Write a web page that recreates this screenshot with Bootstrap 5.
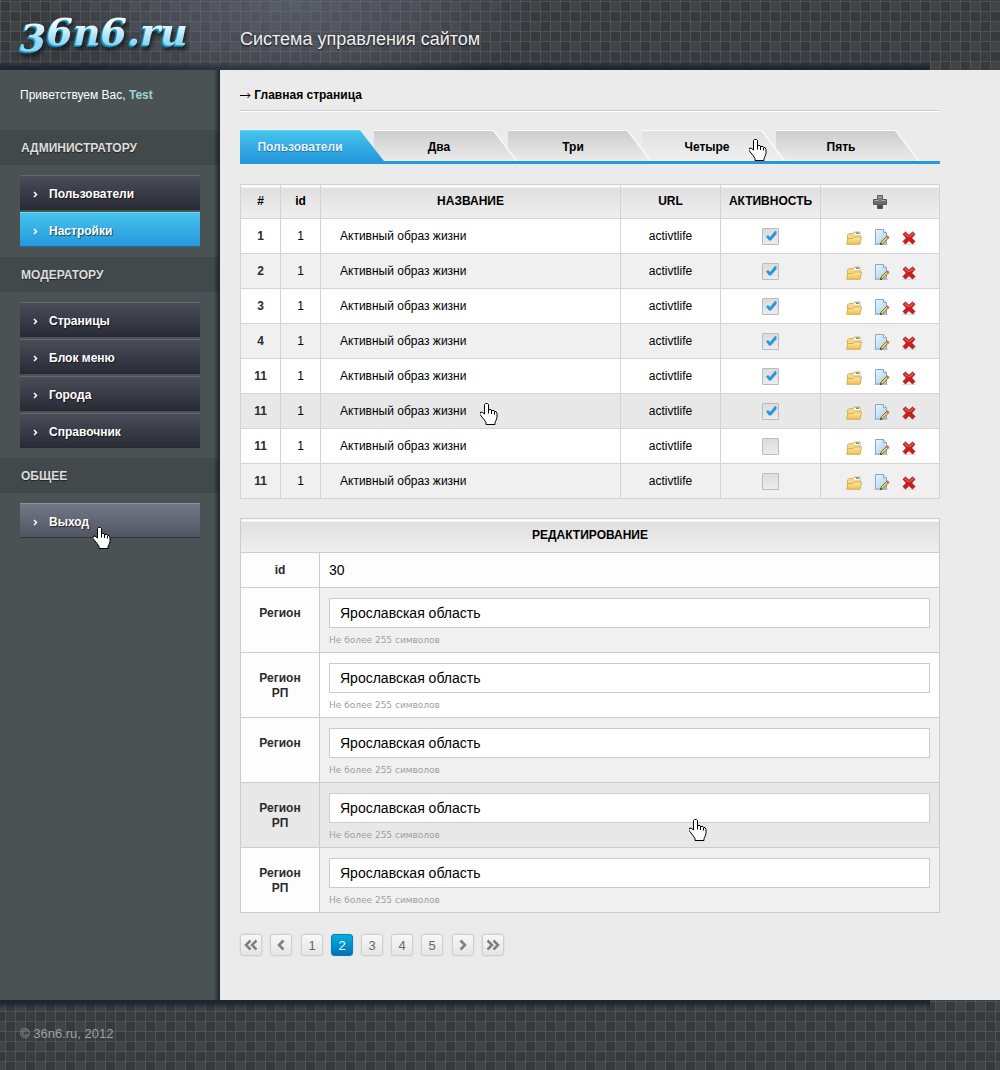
<!DOCTYPE html>
<html lang="ru">
<head>
<meta charset="utf-8">
<meta name="viewport" content="width=device-width, initial-scale=1">
<title>36n6.ru</title>
<link rel="stylesheet" href="https://cdn.jsdelivr.net/npm/bootstrap@5.3.0/dist/css/bootstrap.min.css">
<style>
body{font:12px/15px "Liberation Sans",Arial,sans-serif;color:#000;background:#ebebeb}
a{text-decoration:none;color:inherit}
.plaid{position:relative;height:70px;background-color:#373a3d;
 background-image:linear-gradient(#4e5255 1px,transparent 1px),linear-gradient(90deg,#4e5255 1px,transparent 1px),conic-gradient(#404447 25%,transparent 0 50%,#3a3e41 0 75%,transparent 0);
 background-size:10px 10px,10px 10px,20px 20px}
.top-bar{background-position:0 1px,0 0,0 1px}
.bottom-bar{background-position:0 1px,5px 0,5px 1px}
.plaid::before{content:"";position:absolute;left:0;right:70px;height:9px;background:linear-gradient(#20242f 25%,transparent)}
.top-bar::before{bottom:0;transform:scaleY(-1)}
.bottom-bar::before{top:0}
.top-bar::after{content:"";position:absolute;inset:0;background:radial-gradient(ellipse 250px 110px at 290px 0,rgba(112,116,135,.55),rgba(112,116,135,.3) 50%,transparent)}
.top-bar>*{position:relative;z-index:1}
.brand{width:220px;font:italic bold 38px/48px "DejaVu Serif",serif}
.brand:hover{color:inherit}
.brand-ink{background:linear-gradient(#fff 25%,#8fd9f5 75%);-webkit-background-clip:text;background-clip:text;color:transparent;filter:drop-shadow(-1px 1px 0 #2ba3cf) drop-shadow(-1px 1px 0 #14799f) drop-shadow(2px 3px 2px rgba(0,0,0,.6))}
.old-style{vertical-align:-6px;line-height:0}
.site-title{font-size:18px;line-height:22px;color:#f0f0f0;text-shadow:0 1px 2px #111}
.side{width:220px;background:linear-gradient(270deg,#1f2430,transparent 6px),#4a5254;color:#fff}
.greet{height:60px;padding:18px 20px 0}
.greet a{color:#a0d4d0}
.side h2{font-size:12px;font-weight:700;line-height:33px;height:35px;margin:0;padding:2px 0 0 21px;color:#ddd;background:linear-gradient(270deg,#1f2430,rgba(62,69,70,.72) 6px);text-shadow:0 1px 1px #222}
.side ul{padding:10px 20px;margin:0;gap:2px}
.side-btn{display:flex;align-items:center;height:35px;padding:3px 0 0 13px;gap:11px;color:#fff;font-weight:700;background:linear-gradient(#4a4d58,#292c36);border-top:1px solid #626a70;border-bottom:1px solid #25282f;text-shadow:1px 1px 1px rgba(0,0,0,.6)}
.side-btn.active{background:linear-gradient(#45c4ec,#2698dc);border-color:#6fdaf3 #fff #1a6ba0}
.side-btn.over{background:linear-gradient(#717986,#505561);border-top-color:#8b929b;border-bottom-color:#30343f}
.content{padding:0 60px 44px 20px;min-width:0}
.crumb{height:41px;padding-top:18px;border-bottom:1px solid #ccc;box-shadow:0 1px 0 #fff;margin:0 0 19px;font-size:12px}
.tab-row{border-bottom:3px solid #2698dc;height:34px;margin-bottom:20px}
.tab-row li{margin-right:-10px;position:relative;flex:0 0 144px}
.tab-link{position:relative;z-index:0;display:block;height:31px;line-height:15px;padding:10px 24px 0 10px;text-align:center;font-weight:700;color:#000;background:#fafafa;clip-path:polygon(0 0,120px 0,144px 100%,0 100%)}
.tab-link::before{content:"";position:absolute;inset:1px 0 0 0;z-index:-1;background:linear-gradient(#cdcdcd,#ebebeb);clip-path:polygon(0 0,119px 0,142px 100%,0 100%)}
.tab-link.over::before{background:linear-gradient(#e1e1e1,#efefef)}
.tab-link.active{background:#6ad4f3;color:#eaf3f8;padding-left:0;text-shadow:0 1px 1px #176da6}
.tab-link.active::before{background:linear-gradient(#45c4ec,#2698dc);clip-path:polygon(0 0,120px 0,144px 100%,0 100%)}
.tab-row li:nth-child(1){z-index:5}.tab-row li:nth-child(2){z-index:4}.tab-row li:nth-child(3){z-index:3}.tab-row li:nth-child(4){z-index:2}
.grid-t{width:100%;table-layout:fixed;border-collapse:collapse;margin:0 0 19px}
.grid-t td,.grid-t th{border:1px solid #d3d3d3;height:35px;padding:0;text-align:center;vertical-align:middle}
.grid-t thead th{height:34px;background:linear-gradient(#fff 2px,#dfdfdf 2px,#efefef)}
.grid-t tbody tr{background:#fff}
.grid-t tbody tr:nth-child(even){background:#f0f0f0}
.grid-t tbody tr.over{background:#e8e8e8}
.grid-t tbody th{color:#2b2b2b}
.grid-t td.title{text-align:left;padding-left:19px;position:relative}
.tick{appearance:none;display:block;width:17px;height:17px;margin:0 auto;border:1px solid #bcbcbc;border-radius:1px;background:linear-gradient(#dcdcdc,#ececec)}
.tick:checked{background:url("data:image/svg+xml,%3Csvg xmlns='http://www.w3.org/2000/svg' viewBox='0 0 15 15'%3E%3Cpath d='M3 7.500 5 6l2 2 5-6 1.500.5V5L8 11.500H6z' fill='%232698dc'/%3E%3C/svg%3E"),linear-gradient(#dcdcdc,#ececec)}
.tools{display:flex;justify-content:center;gap:12px;padding:3px 0 0 2px}
.icon-btn{border:0;padding:0;background:none;display:flex}
.form-t td,.form-t th{border-color:#ccc}
.form-t tbody tr.field-row>*{height:65px;vertical-align:top}
.form-t tbody th{background:#fdfdfd}
.form-t tbody tr.over th{background:#e8e8e8}
.form-t tbody tr.plain-row{background:#fdfdfd}
.form-t td{text-align:left;padding:0 9px;position:relative}
.form-t .field-row th{padding-top:18px}
.form-t .field-row td{padding-top:10px}
.id-val{font-size:14px;line-height:18px}
.text-field{display:block;width:100%;height:30px;border:1px solid #ccc;background:#fff;padding:0 10px;font-size:14px;color:#000;border-radius:0}
.hint{display:block;margin-top:6px;font:9px/12px "DejaVu Sans",sans-serif;color:#a0a0a0}
.pages{gap:9px;margin-top:21px}
.pages>div{display:flex;gap:8px}
.pg{width:22px;height:22px;display:flex;align-items:center;justify-content:center;border:1px solid #d0d0d0;border-radius:3px;background:linear-gradient(#f7f7f7,#e5e5e5);color:#666;font-size:13px;box-shadow:0 0 2px #ccc}
.pg.active{background:linear-gradient(#00b0dc,#0072b8);border-color:#0083bd;color:#fff}
.hand{position:absolute;z-index:9;pointer-events:none}
.hand-exit{left:73px;top:24px}.hand-tab{left:107px;top:9px}.hand-row{left:159px;top:9px}.hand-field{left:369px;top:36px}
.copy{padding:26px 20px;color:#a0a0a0;font-size:13px}
</style>
</head>
<body class="d-flex flex-column min-vh-100">
<svg width="0" height="0" class="position-absolute" aria-hidden="true">
<defs>
<linearGradient id="gFold" x1="0" y1="0" x2="0" y2="1"><stop offset="0" stop-color="#fdeaa8"/><stop offset="1" stop-color="#ecbf55"/></linearGradient>
<linearGradient id="gPage" x1="0" y1="0" x2="1" y2="1"><stop offset="0" stop-color="#eef7fd"/><stop offset="1" stop-color="#a4cdec"/></linearGradient>
<linearGradient id="gPlus" x1="0" y1="0" x2="0" y2="1"><stop offset="0" stop-color="#999"/><stop offset="1" stop-color="#444"/></linearGradient>
</defs>
<symbol id="hand" viewBox="0 0 18 22"><path d="M5.500.5h2l1 1v5H11l1 1h2l1 1h1l1 2v4l-1 3-1 2v2h-9v-2l-2-3-4-5v-2l2-.5 2.500 2V1.500z" fill="#fff" stroke="#000"/><path d="M8.500 6v4.500M11.500 7v4M14.500 8.500v3" stroke="#000" fill="none"/></symbol>
<symbol id="folder" viewBox="0 0 16 16"><path d="M1.500 13.500V5L3 3.500h4L8.500 2h5.500v11.500z" fill="#f2d78c" stroke="#d9b25c"/><path d="M8.500 3h5v2h-5z" fill="#fff"/><path d="M10 2.500h3v1.500h-3z" fill="#2aa5df"/><path d="M.7 14.300 2 8.500h5l1.500-1.500h7L14 14.300z" fill="url(#gFold)" stroke="#dcae50"/></symbol>
<symbol id="edit" viewBox="0 0 16 17"><path d="M0 15h14v1H0z" fill="#c8d0d5"/><path d="M1.500.5h8l3 3v11.500h-11z" fill="url(#gPage)" stroke="#82a9c8"/><path d="M9.500.5v3h3" fill="#f4faff" stroke="#82a9c8"/><path d="m7 13 5.500-5.500 1.700 1.700L8.700 14.700l-2.200.5z" fill="#f2d54a" stroke="#5b5637" stroke-width=".8"/><path d="m12 7.800 1.500-1.500 2 2L14 9.800z" fill="#e35a62"/><path d="m6 16 .7-2 1.300 1.300z" fill="#222"/></symbol>
<symbol id="cross" viewBox="0 0 14 14"><path d="M0 13h14v1H0z" fill="#ddd"/><path d="m3.500 1 3.500 3.300L10.500 1 13 3.300 9.600 7l3.400 3.500-2.500 2.500L7 9.600 3.500 13 1 10.500 4.400 7 1 3.300z" fill="#cc1c1c" stroke="#9c1010" stroke-width=".8"/><path d="M3.500 2 7 5.300 10.500 2l1.300 1.300L8 6H6L2.200 3.300z" fill="#e05a5a"/></symbol>
</svg>

<header class="plaid top-bar d-flex">
  <a class="brand ps-3 pt-2" href="#"><span class="brand-ink ps-1"><span class="old-style">3</span>6n6.ru</span></a>
  <div class="site-title ps-3 ms-1 pt-4"><div class="pt-1">Система управления сайтом</div></div>
</header>

<div class="d-flex flex-grow-1">
  <aside class="side flex-shrink-0">
    <div class="greet">Приветствуем Вас, <a class="fw-bold" href="#">Test</a></div>
    <nav id="side-nav"></nav>
  </aside>

  <main class="content flex-grow-1">
    <p class="crumb"><svg width="11" height="9" viewBox="0 0 11 9" aria-hidden="true"><path d="M0 4.500h10M7.500 2l2.500 2.500L7.500 7" fill="none" stroke="#000"/></svg> <b>Главная страница</b></p>
    <ul class="tab-row list-unstyled d-flex">
      <li><a class="tab-link active" href="#">Пользователи</a></li>
      <li><a class="tab-link" href="#">Два</a></li>
      <li><a class="tab-link" href="#">Три</a></li>
      <li><a class="tab-link over" href="#">Четыре</a><svg class="hand hand-tab" width="18" height="22"><use href="#hand"/></svg></li>
      <li><a class="tab-link" href="#">Пять</a></li>
    </ul>

    <table class="grid-t">
      <colgroup><col style="width:40px"><col style="width:40px"><col><col style="width:100px"><col style="width:100px"><col style="width:119px"></colgroup>
      <thead><tr><th>#</th><th>id</th><th>НАЗВАНИЕ</th><th>URL</th><th>АКТИВНОСТЬ</th><th><button class="icon-btn mx-auto" type="button" aria-label="Добавить"><svg width="14" height="14" viewBox="0 0 14 14"><path d="M4.500.5h5v4h4v5h-4v4h-5v-4h-4v-5h4z" fill="url(#gPlus)" stroke="#555"/><path d="M5.500 2h3M1.500 5.500h4M8.500 5.500h4" stroke="#aaa"/></svg></button></th></tr></thead>
      <tbody id="rows"></tbody>
    </table>

    <table class="grid-t form-t">
      <colgroup><col style="width:79px"><col></colgroup>
      <thead><tr><th colspan="2">РЕДАКТИРОВАНИЕ</th></tr></thead>
      <tbody id="fields"><tr class="plain-row"><th>id</th><td><span class="id-val">30</span></td></tr></tbody>
    </table>

    <nav class="pages d-flex" aria-label="Страницы">
      <div>
        <a class="pg" href="#" aria-label="Первая"><svg width="14" height="12" viewBox="0 0 14 12"><path d="M6.500 1.500 2 6l4.500 4.500M12.500 1.500 8 6l4.500 4.500" fill="none" stroke="#808080" stroke-width="2.500"/></svg></a>
        <a class="pg" href="#" aria-label="Назад"><svg width="8" height="12" viewBox="0 0 8 12"><path d="M6.500 1.500 2 6l4.500 4.500" fill="none" stroke="#808080" stroke-width="2.500"/></svg></a>
      </div>
      <div><a class="pg" href="#">1</a><a class="pg active" href="#">2</a><a class="pg" href="#">3</a><a class="pg" href="#">4</a><a class="pg" href="#">5</a></div>
      <div>
        <a class="pg" href="#" aria-label="Вперёд"><svg width="8" height="12" viewBox="0 0 8 12"><path d="M1.500 1.500 6 6l-4.500 4.500" fill="none" stroke="#808080" stroke-width="2.500"/></svg></a>
        <a class="pg" href="#" aria-label="Последняя"><svg width="14" height="12" viewBox="0 0 14 12"><path d="M1.500 1.500 6 6l-4.500 4.500M7.500 1.500 12 6l-4.500 4.500" fill="none" stroke="#808080" stroke-width="2.500"/></svg></a>
      </div>
    </nav>
  </main>
</div>

<footer class="plaid bottom-bar"><p class="copy m-0">© 36n6.ru, 2012</p></footer>

<script src="https://cdn.jsdelivr.net/npm/bootstrap@5.3.0/dist/js/bootstrap.bundle.min.js"></script>
<script>
const hand = c => `<svg class="hand ${c}" width="18" height="22"><use href="#hand"/></svg>`;
const icon = (id, w, h, t) => `<button class="icon-btn" type="button" aria-label="${t}"><svg width="${w}" height="${h}"><use href="#${id}"/></svg></button>`;
const menu = [['АДМИНИСТРАТОРУ', ['Пользователи', 'Настройки']], ['МОДЕРАТОРУ', ['Страницы', 'Блок меню', 'Города', 'Справочник']], ['ОБЩЕЕ', ['Выход']]];
document.getElementById('side-nav').innerHTML = menu.map(([h, items]) => `<h2>${h}</h2><ul class="list-unstyled d-flex flex-column">` +
  items.map(t => `<li class="position-relative"><a href="#" class="side-btn ${t === 'Настройки' ? 'active' : t === 'Выход' ? 'over' : ''}"><svg width="5" height="7" viewBox="0 0 5 7"><path d="m1 1 2.500 2.500L1 6" fill="none" stroke="#fff" stroke-width="1.500"/></svg>${t}</a>${t === 'Выход' ? hand('hand-exit') : ''}</li>`).join('') + '</ul>').join('');
document.getElementById('rows').innerHTML = [1, 2, 3, 4, 11, 11, 11, 11].map((n, i) => `<tr class="${i === 5 ? 'over' : ''}"><th>${n}</th><td>1</td><td class="title">Активный образ жизни${i === 5 ? hand('hand-row') : ''}</td><td>activtlife</td><td><input class="tick" type="checkbox" aria-label="Активность" ${i < 6 ? 'checked' : ''}></td><td><div class="tools align-items-center">${icon('folder', 16, 16, 'Открыть')}${icon('edit', 16, 17, 'Изменить')}${icon('cross', 14, 14, 'Удалить')}</div></td></tr>`).join('');
document.getElementById('fields').insertAdjacentHTML('beforeend', ['Регион', 'Регион<br>РП', 'Регион', 'Регион<br>РП', 'Регион<br>РП'].map((t, i) => `<tr class="field-row ${i === 3 ? 'over' : ''}"><th><label for="f${i}">${t}</label></th><td><input class="text-field" id="f${i}" type="text" value="Ярославская область"><span class="hint">Не более 255 символов</span>${i === 3 ? hand('hand-field') : ''}</td></tr>`).join(''));
</script>
</body>
</html>
